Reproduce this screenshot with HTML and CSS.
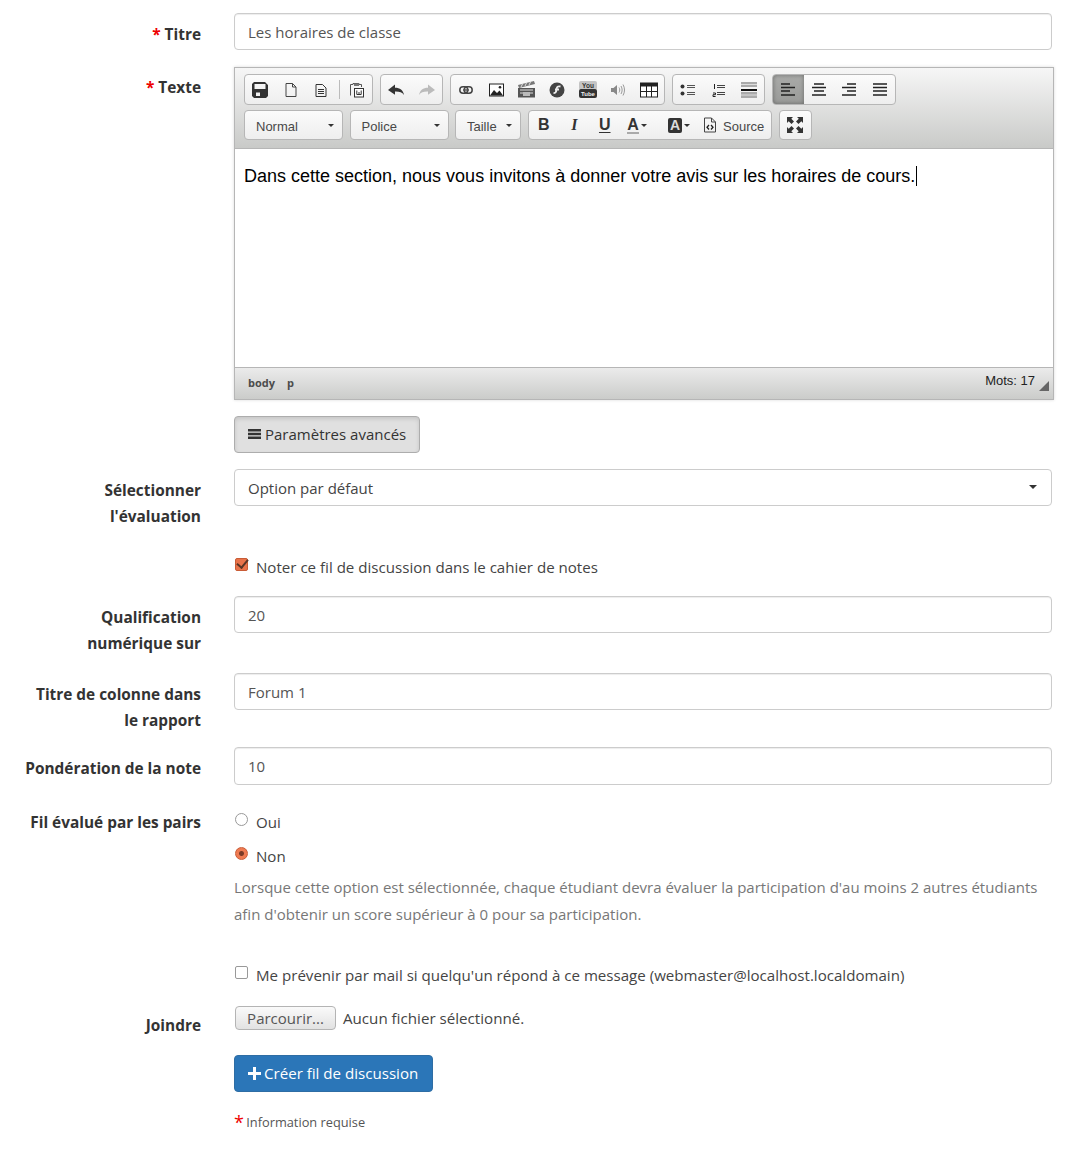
FILE: index.html
```html
<!DOCTYPE html>
<html lang="fr">
<head>
<meta charset="utf-8">
<title>Créer fil de discussion</title>
<link rel="stylesheet" href="styles.css">
</head>
<body>
<form class="form">
  <div class="row row-title">
    <label class="lab"><span class="req">*</span> Titre</label>
    <div class="field"><input class="input" type="text" value="Les horaires de classe"></div>
  </div>
  <div class="row row-editor">
    <label class="lab"><span class="req">*</span> Texte</label>
    <div class="editor">
      <div class="top">
        <div class="tb">
          <div class="grp">
            <span class="b"><svg width="16" height="16" viewBox="0 0 16 16"><path fill="#333" fill-rule="evenodd" d="M0 2 2 0h11l3 3v11l-2 2H2l-2-2zM2.500 2v5h11V2zM4 10.500v3.500h4v-3.500z"/></svg></span>
            <span class="b"><svg width="14" height="16" viewBox="0 0 14 16"><path fill="none" stroke="#444" d="M2 1.500h6.500L12 5v9.500H2zM8.500 1.500V5H12"/></svg></span>
            <span class="b"><svg width="14" height="16" viewBox="0 0 14 16"><path fill="none" stroke="#333" d="M2 2.500h6.500L12 6v8.500H2z"/><path stroke="#333" d="M4 7.500h6M4 9.500h6M4 11.500h6"/></svg></span>
            <span class="sep"></span>
            <span class="b"><svg width="16" height="16" viewBox="0 0 16 16"><path fill="none" stroke="#555" d="M1.500 13.500v-11h2.500v-1h6v1h2.500V5"/><path fill="#777" d="M5 1.500h5V4H5z"/><rect x="5.500" y="6.500" width="9" height="8.500" fill="#fff" stroke="#333"/><path fill="none" stroke="#333" d="M7.800 8.500v4h4.400v-4M10 10v2.500"/></svg></span>
          </div>
          <div class="grp">
            <span class="b"><svg width="18" height="14" viewBox="0 0 18 14"><path fill="#333" d="M1 7 8 1.500v3.300c5 0 8 2.400 9 7.200-2-3-4.500-3.600-9-3.500v3.200z"/></svg></span>
            <span class="b"><svg width="18" height="14" viewBox="0 0 18 14"><path fill="#bbb" d="M17 7 10 1.500v3.300c-5 0-8 2.400-9 7.200 2-3 4.500-3.600 9-3.500v3.200z"/></svg></span>
          </div>
          <div class="grp">
            <span class="b"><svg width="14" height="8" viewBox="0 0 14 8"><rect x=".8" y=".8" width="8" height="6.400" rx="3.200" fill="none" stroke="#444" stroke-width="1.500"/><rect x="5.200" y=".8" width="8" height="6.400" rx="3.200" fill="none" stroke="#444" stroke-width="1.500"/><path stroke="#555" stroke-width="1.500" d="M4 4h6"/></svg></span>
            <span class="b"><svg width="15" height="14" viewBox="0 0 15 14"><rect x=".5" y="1" width="14" height="12" fill="#fff" stroke="#222"/><path fill="#222" d="M1 12.500 5 7l3 3 2.500-2.500 3.500 5z"/><circle cx="11" cy="4.200" r="1.300" fill="#222"/></svg></span>
            <span class="b"><svg width="19" height="17" viewBox="0 0 19 17"><path fill="#555" d="M1 7h17v9.500H1z"/><path fill="#777" d="M1 4 17 0l1 3-16 4z"/><path stroke="#ddd" d="M4 6 5.500 3M8 5l1.500-3M12 4l1.500-3M3 9h13M3 12h13"/><path fill="#bbb" d="M6 11h7v4H6z"/></svg></span>
            <span class="b"><svg width="16" height="16" viewBox="0 0 16 16"><circle cx="8" cy="8" r="7.500" fill="#444"/><path fill="none" stroke="#eee" stroke-width="1.800" d="M11.500 4.500c-3-.7-3.800.8-4 3.200-.2 2.300-.9 3.500-3 3.500M6 7.500h4"/></svg></span>
            <span class="b"><svg width="18" height="17" viewBox="0 0 18 17"><rect x="0" y="0" width="18" height="9" rx="2" fill="#c4c4c4"/><rect x="0" y="8" width="18" height="9" rx="2" fill="#333"/><text class="yt" x="9" y="7">You</text><text class="yt yt2" x="9" y="15">Tube</text></svg></span>
            <span class="b"><svg width="16" height="14" viewBox="0 0 16 14"><path fill="#888" d="M1 5h2.500L7 2v10L3.500 9H1z"/><path fill="none" stroke="#999" d="M9 4.500c1 1.500 1 3.500 0 5M11 3c1.500 2.500 1.500 5.500 0 8M13 1.500c2 3.500 2 7.500 0 11"/></svg></span>
            <span class="b"><svg width="18" height="16" viewBox="0 0 18 16"><rect x=".5" y="1" width="17" height="14" fill="#fff" stroke="#222"/><path fill="#222" d="M0 1h18v3.500H0z"/><path stroke="#222" d="M0 9.500h18M6.500 4v11M11.500 4v11"/></svg></span>
          </div>
          <div class="grp">
            <span class="b"><svg width="16" height="12" viewBox="0 0 16 12"><circle cx="2.500" cy="2.500" r="2" fill="#333"/><circle cx="2.500" cy="9.500" r="2" fill="#333"/><path stroke="#555" d="M7 1.500h8M7 3.500h8M7 8.500h8M7 10.500h8"/></svg></span>
            <span class="b"><svg width="14" height="14" viewBox="0 0 14 14"><path stroke="#444" d="M5 2.500h8M5 4.500h8M5 9.500h8M5 11.500h8"/><path stroke="#222" fill="none" d="M2.500 1v5M1 10h2.500v1.700H1v1.800h2.600"/></svg></span>
            <span class="b"><svg width="16" height="16" viewBox="0 0 16 16"><path fill="#aaa" d="M0 0h16v5H0zM0 10h16v6H0z"/><path stroke="#ddd" d="M0 2.500h16M0 13h16"/><path fill="#111" d="M0 7h16v2H0z"/></svg></span>
          </div>
          <div class="grp">
            <span class="b on"><svg width="14" height="13" viewBox="0 0 14 13"><path class="ln" d="M0 1h9M0 4.500h14M0 8h9M0 12h14"/></svg></span>
            <span class="b"><svg width="14" height="13" viewBox="0 0 14 13"><path class="ln" d="M2 1h10M0 4.500h14M2 8h10M0 12h14"/></svg></span>
            <span class="b"><svg width="14" height="13" viewBox="0 0 14 13"><path class="ln" d="M5 1h9M0 4.500h14M5 8h9M0 12h14"/></svg></span>
            <span class="b"><svg width="14" height="13" viewBox="0 0 14 13"><path class="ln" d="M0 1h14M0 4.500h14M0 8h14M0 12h14"/></svg></span>
          </div>
        </div>
        <div class="tb tb2">
          <div class="grp combo c1"><span>Normal</span><i class="tri"></i></div>
          <div class="grp combo c1"><span>Police</span><i class="tri"></i></div>
          <div class="grp combo c2"><span>Taille</span><i class="tri"></i></div>
          <div class="grp">
            <span class="b l"><b class="tB">B</b></span>
            <span class="b l"><b class="tI">I</b></span>
            <span class="b l"><b class="tU">U</b></span>
            <span class="b l m"><b class="tA">A</b><i class="tri t2"></i></span>
            <span class="b l m2"><b class="tAb">A</b><i class="tri t2"></i></span>
            <span class="src"><svg width="14" height="16" viewBox="0 0 14 16"><path fill="none" stroke="#444" d="M1.500 1h7l4 4v10h-11zM8.500 1v4h4"/><path fill="none" stroke="#222" stroke-width="1.300" d="M6 8 4 10.200 6 12.500M8 8l2 2.200L8 12.500"/></svg>Source</span>
          </div>
          <div class="grp"><span class="b max"><svg width="16" height="16" viewBox="0 0 16 16"><path fill="#333" d="M0 0h6L4.300 1.700 7 4.500 4.500 7 1.700 4.300 0 6zM16 0v6l-1.700-1.700L11.500 7 9 4.500l2.800-2.800L10 0zM0 16v-6l1.700 1.700L4.500 9 7 11.500l-2.700 2.800L6 16zM16 16h-6l1.700-1.700L9 11.500 11.500 9l2.800 2.700L16 10z"/></svg></span></div>
        </div>
      </div>
      <div class="area"><p class="content">Dans cette section, nous vous invitons à donner votre avis sur les horaires de cours.<span class="caret"></span></p></div>
      <div class="foot"><span class="path">body</span><span class="path">p</span><span class="words">Mots: 17</span><i class="grip"></i></div>
    </div>
  </div>
  <div class="row row-adv">
    <span></span>
    <div class="field"><button class="btn adv" type="button"><svg width="13" height="12" viewBox="0 0 13 12"><path fill="#333" d="M0 1h13v2.400H0zM0 4.800h13v2.400H0zM0 8.600h13V11H0z"/></svg> Paramètres avancés</button></div>
  </div>
  <div class="row row-sel">
    <label class="lab">Sélectionner<br>l'évaluation</label>
    <div class="field"><div class="select">Option par défaut<i class="tri t3"></i></div></div>
  </div>
  <div class="row row-note">
    <span></span>
    <label class="check"><input type="checkbox" class="ck" checked> Noter ce fil de discussion dans le cahier de notes</label>
  </div>
  <div class="row row-qual">
    <label class="lab">Qualification<br>numérique sur</label>
    <div class="field"><input class="input" type="text" value="20"></div>
  </div>
  <div class="row row-col">
    <label class="lab">Titre de colonne dans<br>le rapport</label>
    <div class="field"><input class="input" type="text" value="Forum 1"></div>
  </div>
  <div class="row row-pond">
    <label class="lab">Pondération de la note</label>
    <div class="field"><input class="input tall" type="text" value="10"></div>
  </div>
  <div class="row row-peer">
    <label class="lab">Fil évalué par les pairs</label>
    <div class="field">
      <label class="check radio"><input type="radio" class="rd" name="p"> Oui</label>
      <label class="check radio"><input type="radio" class="rd" name="p" checked> Non</label>
      <p class="help">Lorsque cette option est sélectionnée, chaque étudiant devra évaluer la participation d'au moins 2 autres étudiants afin d'obtenir un score supérieur à 0 pour sa participation.</p>
    </div>
  </div>
  <div class="row row-mail">
    <span></span>
    <label class="check"><input type="checkbox" class="ck"> Me prévenir par mail si quelqu'un répond à ce message (webmaster@localhost.localdomain)</label>
  </div>
  <div class="row row-file">
    <label class="lab">Joindre</label>
    <div class="file"><button class="browse" type="button">Parcourir...</button><span>Aucun fichier sélectionné.</span></div>
  </div>
  <div class="row row-go">
    <span></span>
    <div class="field"><button class="btn go" type="button"><svg width="13" height="13" viewBox="0 0 13 13"><path fill="#fff" d="M5 0h3v5h5v3H8v5H5V8H0V5h5z"/></svg> Créer fil de discussion</button></div>
  </div>
  <div class="row">
    <span></span>
    <div class="note"><span class="req">*</span> Information requise</div>
  </div>
</form>
</body>
</html>
```
FILE: styles.css
```css
* { box-sizing: border-box; }
html, body { margin: 0; padding: 0; }
body {
  background: #fff;
  font-family: "Open Sans", sans-serif;
  font-size: 15px;
  color: #555;
  height: 1149px;
  overflow: hidden;
}
.form { padding-top: 13px; }
.row {
  display: grid;
  grid-template-columns: 201px 818px;
  column-gap: 33px;
  margin-bottom: 17px;
}
.lab {
  text-align: right;
  font-weight: 700;
  font-size: 15.4px;
  line-height: 26px;
  color: #333;
  padding-top: 9px;
}
.req { color: #e00; }
.input {
  display: block;
  width: 100%;
  height: 37px;
  border: 1px solid #ccc;
  border-radius: 4px;
  padding: 0 13px;
  font: 15px "Open Sans", sans-serif;
  color: #555;
  background: #fff;
  box-shadow: inset 0 1px 1px rgba(0,0,0,.075);
}
.input.tall { height: 38px; }
.row-editor { margin-bottom: 16px; }
.row-editor .lab { padding-top: 8px; }
.editor {
  width: 820px;
  height: 333px;
  border: 1px solid #b6b6b6;
  display: flex;
  flex-direction: column;
  box-shadow: 0 0 3px rgba(0,0,0,.15);
}
.top {
  height: 81px;
  padding: 6px 9px 0;
  background: linear-gradient(#f6f6f6, #c9cac8);
  border-bottom: 1px solid #b6b6b6;
  flex: none;
}
.tb { display: flex; gap: 6.8px; height: 31px; }
.tb2 { margin-top: 5px; height: 30px; gap: 6.5px; }
.grp {
  display: flex;
  align-items: stretch;
  border: 1px solid #b6b6b6;
  border-radius: 4px;
  background: linear-gradient(#fbfbfb, #eeeeee);
}
.b {
  width: 30.5px;
  flex: none;
  display: flex;
  align-items: center;
  justify-content: center;
}
.b svg { display: block; }
.b.max { width: 31px; }
.b.on {
  background: linear-gradient(#a9aaa8, #9a9b99);
  box-shadow: inset 0 0 4px rgba(0,0,0,.35);
  border-radius: 3px 0 0 3px;
}
.ln { stroke: #222; stroke-width: 1.700; fill: none; }
.sep { width: 1px; margin: 5px 2px; background: #bbb; flex: none; }
.yt { font: 700 6.500px "Liberation Sans", sans-serif; fill: #333; text-anchor: middle; }
.yt2 { font-size: 6px; fill: #eee; }
.combo {
  position: relative;
  align-items: center;
  padding: 3px 0 0 11px;
  font: 13px "Liberation Sans", sans-serif;
  color: #484848;
}
.c1 { width: 99px; }
.c2 { width: 66px; }
.tri {
  display: block;
  width: 0;
  height: 0;
  border: 3px solid transparent;
  border-top: 3px solid #333;
  border-bottom: 0;
}
.combo .tri { position: absolute; right: 8px; top: 13px; }
.tB, .tI, .tU, .tA, .tAb { font: 700 16px "Liberation Sans", sans-serif; color: #333; }
.tI { font-family: "Liberation Serif", serif; font-style: italic; }
.tU { text-decoration: underline; text-underline-offset: 2px; }
.tA { border-bottom: 2px solid #aaa; line-height: 15px; }
.tAb { background: #333; color: #ddd; border-radius: 2px; padding: 0 2px; line-height: 15px; font-size: 14px; }
.t2 { margin-left: 2px; }
.m { width: 34px; }
.m2 { width: 34px; margin-left: 8px; }
.l { height: 100%; }
.src {
  display: flex;
  align-items: center;
  gap: 6px;
  padding: 3px 7px 0 7px;
  font: 13px "Liberation Sans", sans-serif;
  color: #484848;
}
.src svg { margin-top: -3px; }
.area { flex: 1; background: #fff; padding: 17px 9px; }
.content {
  margin: 0;
  font: 18px/21px "Liberation Sans", Arial, sans-serif;
  color: #000;
  position: relative;
}
.caret { display: inline-block; width: 1px; height: 20px; background: #000; margin-left: 1px; vertical-align: -4px; }
.foot {
  position: relative;
  height: 32px;
  flex: none;
  display: flex;
  align-items: center;
  padding: 0 13px;
  gap: 12px;
  border-top: 1px solid #b6b6b6;
  background: linear-gradient(#ebebeb, #cbccca);
}
.path { font-size: 11px; font-weight: 700; color: #4c4c4c; margin-top: -2px; }
.words {
  margin-left: auto;
  margin-right: 5px;
  margin-top: -6px;
  font: 13px "Liberation Sans", sans-serif;
  color: #222;
}
.grip {
  position: absolute;
  right: 4px;
  bottom: 8px;
  width: 0;
  height: 0;
  border-left: 10px solid transparent;
  border-bottom: 10px solid #666;
}
.btn {
  display: inline-flex;
  align-items: center;
  height: 37px;
  border-radius: 4px;
  font: 15px "Open Sans", sans-serif;
  padding: 0 13px;
  gap: 4px;
}
.adv {
  background: #e0e0e0;
  border: 1px solid #adadad;
  color: #333;
  padding-bottom: 2px;
  box-shadow: inset 0 2px 4px rgba(0,0,0,.12);
}
.row-adv { margin-bottom: 16px; }
.select {
  position: relative;
  height: 37px;
  border: 1px solid #ccc;
  border-radius: 4px;
  padding: 0 13px;
  line-height: 36px;
  color: #444;
  background: #fff;
}
.t3 { position: absolute; right: 14px; top: 15px; border-width: 4px; border-top-color: #333; border-bottom: 0; }
.row-sel { margin-bottom: 24px; }
.check {
  display: flex;
  align-items: center;
  gap: 8px;
  height: 26px;
  color: #444;
  font-size: 15.1px;
}
.ck, .rd {
  appearance: none;
  -webkit-appearance: none;
  margin: -5px 0 0 1px;
  width: 13px;
  height: 13px;
  flex: none;
  position: relative;
  background: #fff;
  border: 1px solid #999;
}
.ck { border-radius: 2px; }
.ck:checked { background: #e9734a; border-color: #c95c36; }
.ck:checked::after {
  content: "";
  position: absolute;
  left: 3px;
  top: -2px;
  width: 5px;
  height: 9px;
  border: solid #5a3526;
  border-width: 0 2px 2px 0;
  transform: rotate(40deg);
}
.rd { border-radius: 50%; }
.rd:checked { background: radial-gradient(circle, #7a3a26 0 2px, #ef7b52 3px); border-color: #c95c36; }
.row-note { margin-bottom: 16px; }
.row-qual { margin-bottom: 16px; }
.row-col { margin-bottom: 13px; }
.row-pond { margin-bottom: 24px; }
.row-peer .lab { padding-top: 1px; }
.radio { margin-bottom: 8px; }
.help { margin: -3px 0 0; line-height: 27px; color: #777; font-size: 15px; }
.row-peer { margin-bottom: 34px; }
.row-mail { margin-bottom: 18px; }
.file { display: flex; align-items: center; gap: 7px; height: 24px; color: #444; font-size: 15.15px; }
.browse {
  height: 24px;
  width: 101px;
  margin-left: 1px;
  padding: 0;
  border: 1px solid #b4b4b4;
  border-radius: 4px;
  background: linear-gradient(#fafafa, #e2e2e2);
  font: 15px "Open Sans", sans-serif;
  color: #555;
}
.row-file { margin-bottom: 16px; }
.row-file .lab { padding-top: 7px; line-height: 26px; }
.go {
  background: #2b76b8;
  border: 1px solid #2e6da4;
  color: #fff;
  padding: 0 14px 2px 13px;
  gap: 3px;
  font-size: 15.1px;
}
.go svg { margin-top: 2px; }
.row-go { margin-bottom: 18px; }
.note { font-size: 12.8px; color: #555; line-height: 24px; }
.note .req { font-size: 18px; line-height: 1; margin-right: -1px; vertical-align: -2px; }
```
